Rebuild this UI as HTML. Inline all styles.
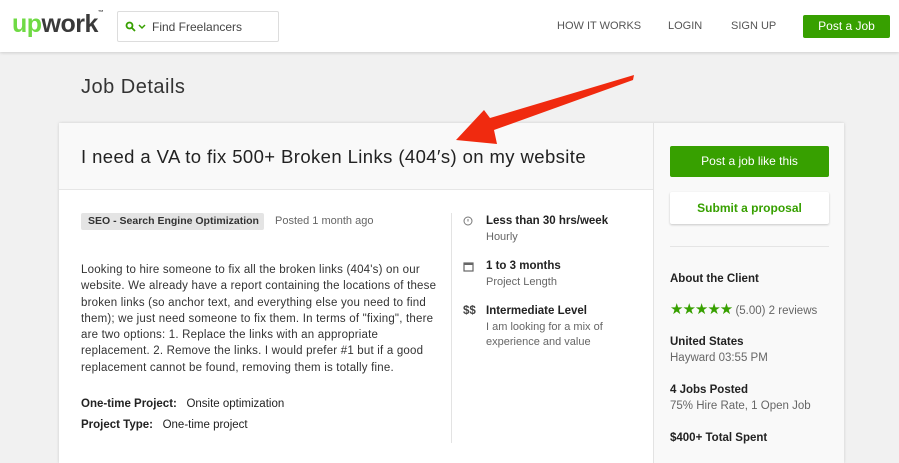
<!DOCTYPE html>
<html><head><style>
*{margin:0;padding:0;box-sizing:border-box}
body{width:899px;height:446px;overflow:hidden;background:#f1f1f1;font-family:"Liberation Sans",sans-serif;color:#222;position:relative}
.hdr{position:absolute;left:0;top:0;width:899px;height:52px;background:#fff;box-shadow:0 1px 3px rgba(0,0,0,.15)}
.abs{position:absolute}
.nav{font-size:11px;color:#555;top:20px}
.card{position:absolute;left:59px;top:123px;width:785px;height:340px;background:#fff;box-shadow:0 0 3px rgba(0,0,0,.15)}
.side{position:absolute;left:594px;top:0;width:191px;height:340px;background:#f9f9f9;border-left:1px solid #e3e3e3}
.tband{position:absolute;left:0;top:0;width:594px;height:67px;background:#f9f9f9;border-bottom:1px solid #e6e6e6}
.b{font-weight:bold}
.s{font-size:11px;color:#666}
.t{font-size:11.5px}
</style></head><body>
<div class="hdr">
 <div class="abs" style="left:12px;top:10px;font-size:25px;letter-spacing:-.5px;font-weight:bold"><span style="color:#6fda44">up</span><span style="color:#3a3a3a">work</span><span style="font-size:6px;vertical-align:top;color:#555">™</span></div>
 <div class="abs" style="left:117px;top:11px;width:162px;height:31px;border:1px solid #ddd;border-radius:2px">
  <svg class="abs" style="left:7px;top:9px" width="22" height="12"><circle cx="4.5" cy="4.5" r="3" fill="none" stroke="#37a000" stroke-width="1.8"/><path d="M7 7l3 3" stroke="#37a000" stroke-width="1.8"/><path d="M14 4l3 3 3-3" fill="none" stroke="#37a000" stroke-width="1.5"/></svg>
  <span class="abs" style="left:34px;top:8px;font-size:12px;color:#444">Find Freelancers</span>
 </div>
 <div class="abs nav" style="left:557px">HOW IT WORKS</div>
 <div class="abs nav" style="left:668px">LOGIN</div>
 <div class="abs nav" style="left:731px">SIGN UP</div>
 <div class="abs" style="left:803px;top:15px;width:87px;height:23px;background:#37a000;border-radius:2px;color:#fff;font-size:12px;text-align:center;line-height:23px">Post a Job</div>
</div>
<div class="abs" style="left:81px;top:76px;font-size:20px;letter-spacing:.5px;color:#333">Job Details</div>
<div class="card">
 <div class="tband"><div class="abs" style="left:22px;top:23px;font-size:18.5px;letter-spacing:.4px;color:#222">I need a VA to fix 500+ Broken Links (404′s) on my website</div></div>
 <div class="abs b" style="left:22px;top:90px;width:183px;height:17px;background:#e4e4e4;border-radius:2px;font-size:10.5px;color:#333;line-height:17px;padding-left:7px">SEO - Search Engine Optimization</div>
 <div class="abs s" style="left:216px;top:92px">Posted 1 month ago</div>
 <div class="abs" style="left:392px;top:90px;width:1px;height:230px;background:#e3e3e3"></div>
 <div class="abs t" style="left:22px;top:139px;width:362px;line-height:16.3px;letter-spacing:.2px;color:#333">Looking to hire someone to fix all the broken links (404's) on our website. We already have a report containing the locations of these broken links (so anchor text, and everything else you need to find them); we just need someone to fix them. In terms of "fixing", there are two options: 1. Replace the links with an appropriate replacement. 2. Remove the links. I would prefer #1 but if a good replacement cannot be found, removing them is totally fine.</div>
 <div class="abs t" style="left:22px;top:275px"><b>One-time Project:</b>&nbsp;&nbsp; Onsite optimization</div>
 <div class="abs t" style="left:22px;top:296px"><b>Project Type:</b>&nbsp;&nbsp; One-time project</div>
 <svg class="abs" style="left:404px;top:93px" width="10" height="10"><circle cx="5" cy="5" r="4" fill="none" stroke="#777"/><path d="M5 3v2.5" stroke="#777"/></svg>
 <svg class="abs" style="left:404px;top:138px" width="11" height="11"><rect x="1" y="2" width="9" height="8" fill="none" stroke="#666" stroke-width="1.2"/><rect x="1" y="2" width="9" height="2" fill="#666"/></svg>
 <div class="abs b t" style="left:404px;top:182px;color:#444">$$</div>
 <div class="abs b t" style="left:427px;top:92px">Less than 30 hrs/week</div>
 <div class="abs s" style="left:427px;top:108px">Hourly</div>
 <div class="abs b t" style="left:427px;top:137px">1 to 3 months</div>
 <div class="abs s" style="left:427px;top:153px">Project Length</div>
 <div class="abs b t" style="left:427px;top:182px">Intermediate Level</div>
 <div class="abs s" style="left:427px;top:197px;line-height:15px">I am looking for a mix of<br>experience and value</div>
 <div class="side">
  <div class="abs" style="left:16px;top:23px;width:159px;height:31px;background:#37a000;border-radius:2px;color:#fff;font-size:12px;text-align:center;line-height:31px">Post a job like this</div>
  <div class="abs" style="left:16px;top:69px;width:159px;height:32px;background:#fff;border-radius:2px;box-shadow:0 1px 2px rgba(0,0,0,.2);color:#37a000;font-size:12px;font-weight:bold;text-align:center;line-height:32px">Submit a proposal</div>
  <div class="abs" style="left:16px;top:123px;width:159px;height:1px;background:#e5e5e5"></div>
  <div class="abs b t" style="left:16px;top:150px">About the Client</div>
  <div class="abs t" style="left:16px;top:177px;color:#666"><span style="color:#37a000;font-size:15px;letter-spacing:-1px">★★★★★</span> (5.00) 2 reviews</div>
  <div class="abs b t" style="left:16px;top:213px">United States</div>
  <div class="abs t" style="left:16px;top:229px;color:#666">Hayward 03:55 PM</div>
  <div class="abs b t" style="left:16px;top:261px">4 Jobs Posted</div>
  <div class="abs t" style="left:16px;top:277px;color:#666">75% Hire Rate, 1 Open Job</div>
  <div class="abs b t" style="left:16px;top:309px">$400+ Total Spent</div>
 </div>
</div>
<svg class="abs" style="left:0;top:0" width="899" height="446"><path d="M633 80L634 75L490 118L484 110L456 140L497 144L494 130Z" fill="#f02a0f"/></svg>
</body></html>
